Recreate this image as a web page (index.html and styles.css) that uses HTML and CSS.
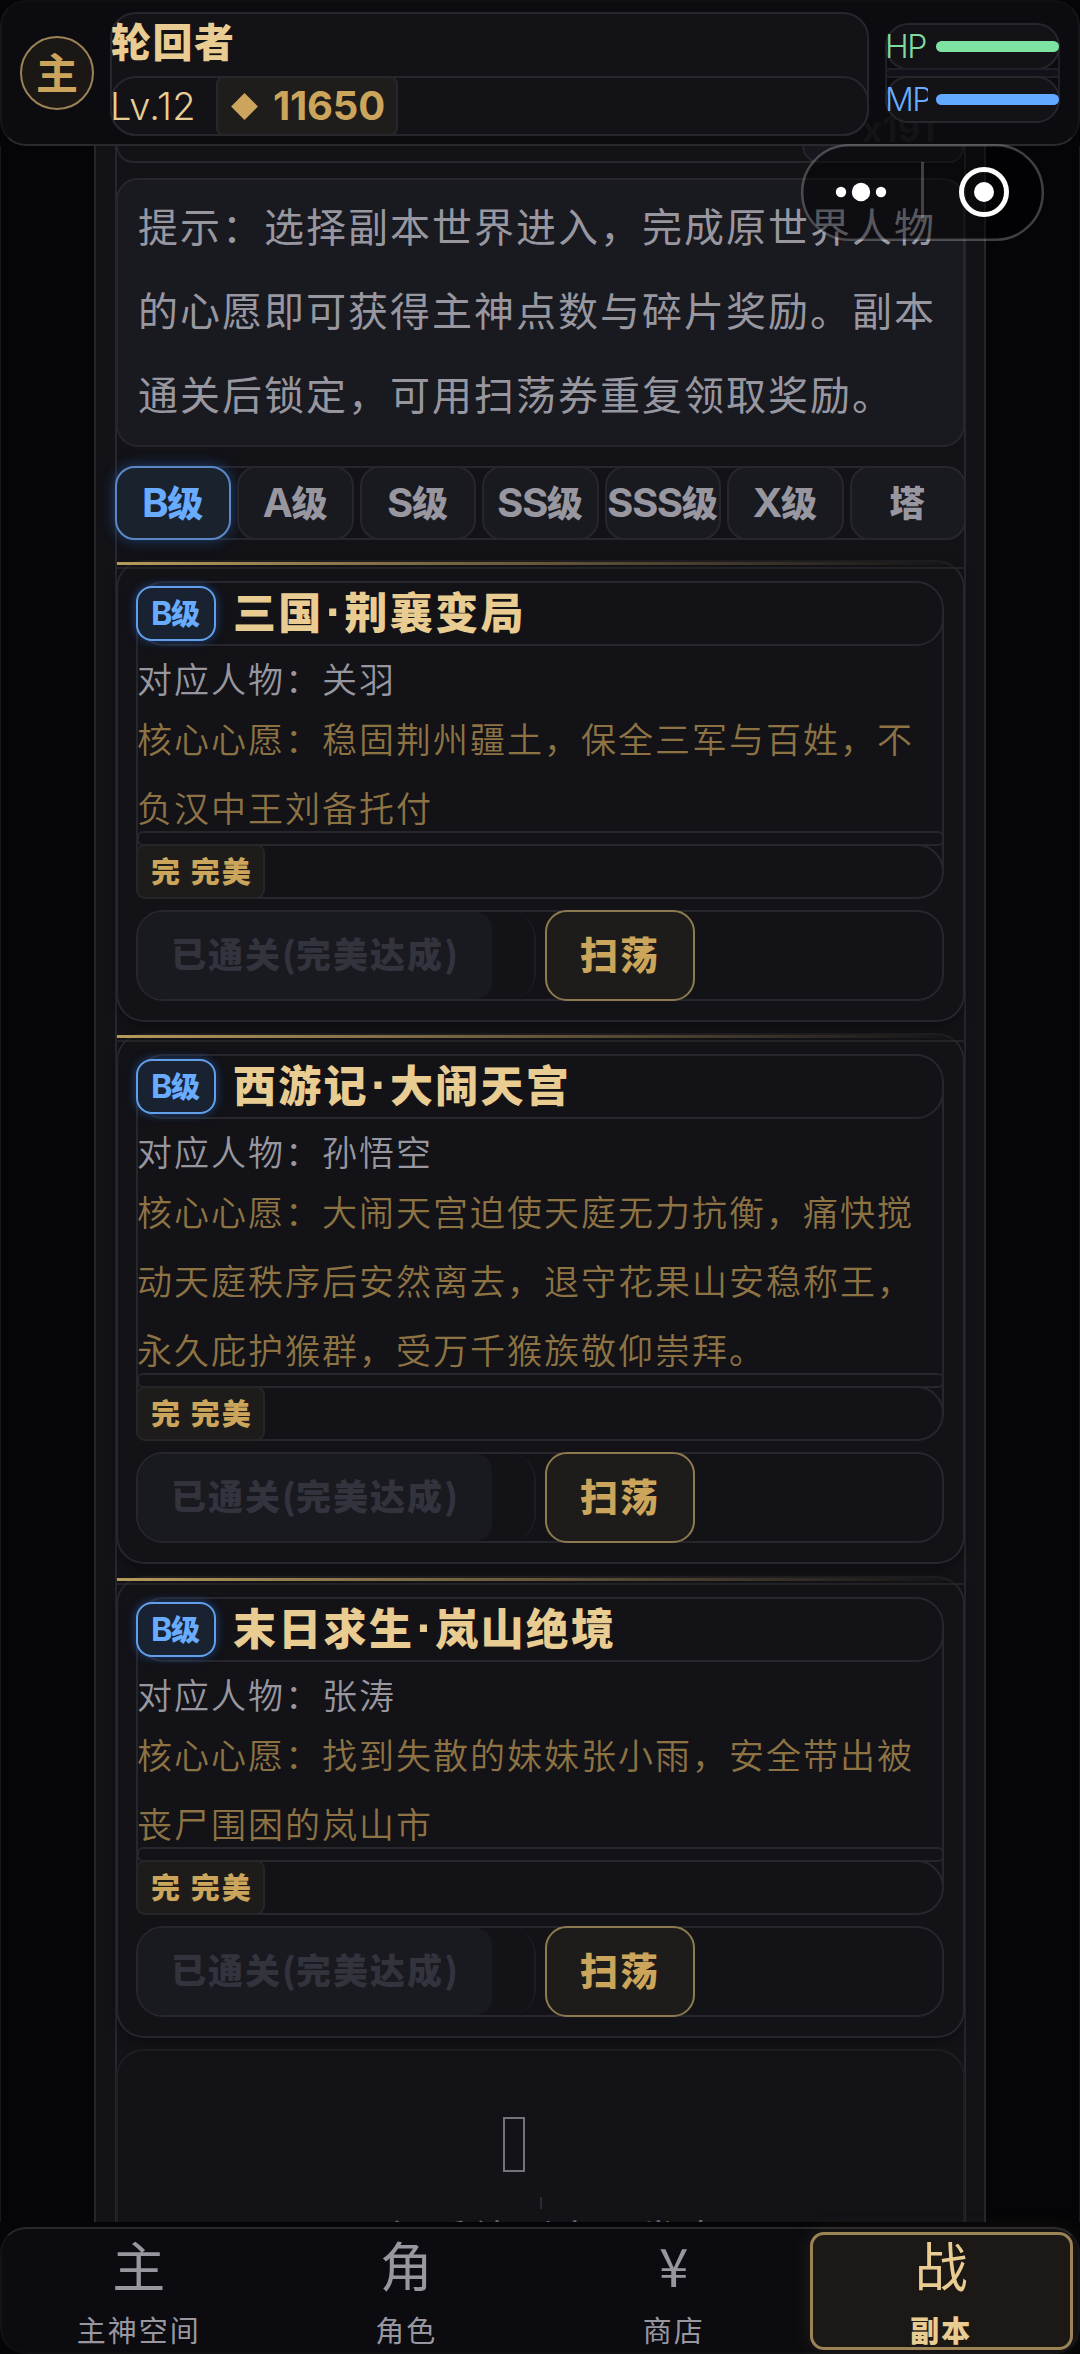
FILE: index.html
```html
<!DOCTYPE html>
<html lang="zh-CN">
<head>
<meta charset="utf-8">
<title>副本</title>
<link rel="stylesheet" href="styles.css">
</head>
<body>
<div class="app">
  <header class="header">
    <div class="avatar">主</div>
    <div class="profile">
      <div class="profile-name">轮回者</div>
      <div class="profile-row">
        <span class="level">Lv.12</span>
        <span class="points"><i class="diamond"></i><b>11650</b></span>
      </div>
    </div>
    <div class="vitals">
      <div class="vital hp"><span class="vital-label">HP</span><span class="bar"></span></div>
      <div class="vital-gap"></div>
      <div class="vital mp"><span class="vital-label">MP</span><span class="bar"></span></div>
    </div>
    <span class="ticket-count">x191</span>
  </header>

  <main class="main">
    <div class="page">
      <div class="list">
        <div class="prev"><div class="prev-chip"></div></div>
        <div class="note">提示：选择副本世界进入，完成原世界人物的心愿即可获得主神点数与碎片奖励。副本通关后锁定，可用扫荡券重复领取奖励。</div>
        <div class="tabs">
          <div class="tab active"><span class="lat">B</span>级</div>
          <div class="tab"><span class="lat">A</span>级</div>
          <div class="tab"><span class="lat">S</span>级</div>
          <div class="tab"><span class="lat">SS</span>级</div>
          <div class="tab"><span class="lat">SSS</span>级</div>
          <div class="tab"><span class="lat">X</span>级</div>
          <div class="tab">塔</div>
        </div>

        <section class="card">
          <div class="info">
            <div class="title-row"><span class="rank"><span class="lat">B</span>级</span><h2 class="title">三国<span class="dot">·</span>荆襄变局</h2></div>
            <p class="person">对应人物：关羽</p>
            <p class="wish">核心心愿：稳固荆州疆土，保全三军与百姓，不负汉中王刘备托付</p>
            <div class="divider"></div>
            <div class="result-row"><span class="result">完 完美</span></div>
          </div>
          <div class="actions"><div class="done-wrap"><div class="done">已通关<span class="paren">(</span>完美达成<span class="paren">)</span></div></div><div class="sweep">扫荡</div></div>
        </section>

        <section class="card">
          <div class="info">
            <div class="title-row"><span class="rank"><span class="lat">B</span>级</span><h2 class="title">西游记<span class="dot">·</span>大闹天宫</h2></div>
            <p class="person">对应人物：孙悟空</p>
            <p class="wish">核心心愿：大闹天宫迫使天庭无力抗衡，痛快搅动天庭秩序后安然离去，退守花果山安稳称王，永久庇护猴群，受万千猴族敬仰崇拜。</p>
            <div class="divider"></div>
            <div class="result-row"><span class="result">完 完美</span></div>
          </div>
          <div class="actions"><div class="done-wrap"><div class="done">已通关<span class="paren">(</span>完美达成<span class="paren">)</span></div></div><div class="sweep">扫荡</div></div>
        </section>

        <section class="card">
          <div class="info">
            <div class="title-row"><span class="rank"><span class="lat">B</span>级</span><h2 class="title">末日求生<span class="dot">·</span>岚山绝境</h2></div>
            <p class="person">对应人物：张涛</p>
            <p class="wish">核心心愿：找到失散的妹妹张小雨，安全带出被丧尸围困的岚山市</p>
            <div class="divider"></div>
            <div class="result-row"><span class="result">完 完美</span></div>
          </div>
          <div class="actions"><div class="done-wrap"><div class="done">已通关<span class="paren">(</span>完美达成<span class="paren">)</span></div></div><div class="sweep">扫荡</div></div>
        </section>

        <div class="empty">
          <div class="empty-icon"></div>
          <div class="empty-tick"></div>
          <div class="empty-text">B级后续副本开发中</div>
        </div>
      </div>
    </div>
  </main>

  <nav class="nav">
    <div class="nav-item"><span class="nav-icon">主</span><span class="nav-label">主神空间</span></div>
    <div class="nav-item"><span class="nav-icon">角</span><span class="nav-label">角色</span></div>
    <div class="nav-item"><span class="nav-icon">¥</span><span class="nav-label">商店</span></div>
    <div class="nav-item active"><span class="nav-icon">战</span><span class="nav-label">副本</span></div>
  </nav>

  <div class="capsule">
    <svg width="243" height="97" viewBox="0 0 243 97">
      <rect x="1.25" y="1.25" width="240.5" height="94.5" rx="47" fill="#000" fill-opacity=".42" stroke="#fff" stroke-opacity=".24" stroke-width="2.5"/>
      <circle cx="40" cy="48" r="5.2" fill="#fff"/><circle cx="60" cy="48" r="9.2" fill="#fff"/><circle cx="80" cy="48" r="5.2" fill="#fff"/>
      <path d="M121.5 18v60" stroke="#fff" stroke-opacity=".22" stroke-width="3"/>
      <circle cx="183" cy="48" r="22.5" fill="none" stroke="#fff" stroke-width="5"/><circle cx="183" cy="48" r="10" fill="#fff"/>
    </svg>
  </div>
</div>
</body>
</html>
```
FILE: styles.css
```css
* { box-sizing: border-box; }
:root {
  --line: #26262c;
  --panel: #121217;
  --raised: #191920;
  --gold: #cba55b;
  --gold-light: #e8cc92;
  --muted: #9897a0;
  --blue: #68abff;
}
body {
  margin: 0;
  background: #000;
  color: var(--muted);
  font-family: "Noto Sans CJK SC", sans-serif;
  font-weight: 400;
}
h2, p { margin: 0; }
.app {
  position: relative;
  display: flex;
  flex-direction: column;
  width: 1080px;
  height: 2354px;
  overflow: hidden;
  background: #050507;
}

/* Header */
.header {
  position: relative;
  flex: none;
  display: flex;
  align-items: flex-start;
  height: 146px;
  padding: 10px 18px;
  background: #0b0b10;
  border: 2px solid #15151a;
  border-top-color: #0f0f14;
  border-bottom-color: #29292e;
  border-radius: 26px;
}
.avatar {
  width: 74px;
  height: 74px;
  margin-top: 24px;
  border: 2px solid #9b8355;
  border-radius: 50%;
  background: #1a1714;
  color: var(--gold);
  font-size: 42px;
  font-weight: 700;
  line-height: 66px;
  text-align: center;
}
.profile {
  position: relative;
  z-index: 1;
  width: 759px;
  height: 124px;
  margin-left: 16px;
  background: var(--panel);
  border: 2px solid var(--line);
  border-radius: 26px;
}
.profile-name {
  height: 62px;
  margin-left: -1px;
  color: var(--gold-light);
  font-size: 40px;
  font-weight: 900;
  letter-spacing: 1.5px;
  line-height: 52px;
}
.profile-row {
  display: flex;
  height: 60px;
  margin: 0 -2px;
  border: 2px solid var(--line);
  border-radius: 26px;
}
.level {
  width: 106px;
  margin-left: -2px;
  color: var(--gold-light);
  font: 300 38px/57px Inter, sans-serif;
  letter-spacing: .4px;
}
.points {
  display: flex;
  align-items: center;
  width: 182px;
  height: 60px;
  margin-top: -2px;
  padding-left: 16px;
  color: var(--gold);
  background: #1f1d1c;
  border: 2px solid #27272b;
  border-radius: 8px;
}
.points b { margin-left: 18px; font: 700 40px/1 Inter, sans-serif; letter-spacing: -.2px; }
.diamond {
  width: 19px;
  height: 19px;
  margin: 0 2px 0 0;
  background: var(--gold);
  transform: translateX(1px) rotate(45deg);
}
.vitals {
  position: relative;
  z-index: 1;
  width: 175px;
  height: 100px;
  margin: 11px 0 0 16px;
}
.vitals::before {
  content: "";
  position: absolute;
  inset: 20px 0;
  border: solid #1f1f25;
  border-width: 0 2px;
}
.vital {
  position: relative;
  display: flex;
  align-items: center;
  height: 47px;
  background: var(--panel);
  border: 2px solid var(--line);
  border-radius: 24px;
}
.vital-label {
  width: 42px;
  margin: 0 8px 0 -1px;
  overflow: hidden;
  font: 300 32px/40px Inter, sans-serif;
  letter-spacing: -1.5px;
  text-indent: -1px;
}
.vital-gap {
  position: relative;
  height: 10px;
  margin: -2px 0;
  background: #12121b;
  border: 2px solid #1f1f25;
  border-radius: 4px;
}
.bar { flex: 1; height: 11px; margin-right: -1px; border-radius: 6px; }
.hp { color: #7fdc9f; }
.hp .bar { background: #7ee2a2; }
.mp { color: var(--blue); }
.mp .bar { background: #63a9ff; }
.ticket-count {
  position: absolute;
  left: 860px;
  top: 107px;
  color: #141417;
  font: 700 35px/40px Inter, sans-serif;
}

/* Scrolled page */
.main { flex: none; height: 2076px; overflow: hidden; border: solid #17171b; border-width: 0 1px; }
.page {
  width: 892px;
  height: 2100px;
  margin-left: 93px;
  padding: 0 18px 0 19px;
  background: var(--panel);
  border: solid var(--line);
  border-width: 0 2px;
}
.list {
  display: flex;
  flex-direction: column;
  height: 2100px;
  border: solid var(--line);
  border-width: 0 2px;
}
.prev {
  flex: none;
  display: flex;
  justify-content: flex-end;
  height: 17px;
  margin: 0 -1px;
  border: solid var(--line);
  border-width: 0 2px 2px;
  border-radius: 0 0 24px 24px;
}
.prev-chip { width: 161px; height: 17px; background: #171720; border: solid var(--line); border-width: 0 2px 2px; border-radius: 0 0 14px 18px; }
.note {
  flex: none;
  height: 269px;
  margin: 15px -1px 0;
  padding: 3px 0 0 20px;
  background: var(--raised);
  border: 2px solid var(--line);
  border-radius: 22px;
  font-size: 40px;
  letter-spacing: 2px;
  line-height: 84px;
}
.tabs {
  flex: none;
  display: flex;
  gap: 6px;
  height: 74px;
  margin: 19px -2px 0;
  border: solid var(--line);
  border-width: 2px 0;
  border-radius: 20px;
}
.tab {
  flex: 1 1 0;
  height: 74px;
  margin-top: -2px;
  background: var(--raised);
  border: 2px solid var(--line);
  border-radius: 20px;
  font-size: 36px;
  font-weight: 900;
  line-height: 67px;
  text-align: center;
  text-indent: -1px;
  white-space: nowrap;
}
.lat { font-family: Inter, sans-serif; font-size: 1.12em; font-weight: 700; letter-spacing: -1.5px; line-height: 1; }
.tab.active {
  color: var(--blue);
  background: #1a222e;
  border-color: #5b87c5;
  box-shadow: 0 0 14px rgba(50, 120, 220, .45);
}

/* Cards */
.card {
  position: relative;
  flex: none;
  margin: 11.4px -1px 0;
  padding: 19px 19px 19px 18px;
  background: var(--panel);
  border: 2px solid var(--line);
  border-top-color: #1e1c1e;
  border-radius: 28px;
  box-shadow: 0 4px 12px rgba(0, 0, 0, .3);
}
.tabs + .card { margin-top: 20px; }
.card::before {
  content: "";
  position: absolute;
  left: -1px;
  right: -1px;
  top: 0;
  height: 5px;
  background: linear-gradient(90deg, #b59a5c, rgba(203, 165, 91, 0)) 0 0 / 100% 3px no-repeat;
  border-bottom: 2px solid rgba(58, 55, 58, .45);
}
.info { position: relative; }
.info::before {
  content: "";
  position: absolute;
  inset: 32px 0 24px;
  border: solid var(--line);
  border-width: 0 2px;
}
.title-row, .result-row, .person, .wish, .divider { position: relative; }
.title-row {
  display: flex;
  align-items: center;
  height: 65px;
  border: 2px solid var(--line);
  border-radius: 28px;
  background: var(--panel);
}
.rank {
  width: 80px;
  height: 55px;
  margin: 0 0 0 -2px;
  color: var(--blue);
  background: #192230;
  border: 2px solid #639fe9;
  border-radius: 16px;
  box-shadow: 0 0 10px rgba(50, 120, 230, .5);
  font-size: 29px;
  font-weight: 900;
  line-height: 48px;
  text-align: center;
  text-indent: -1px;
  white-space: nowrap;
}
.title {
  margin: -6px 0 0 17px;
  color: var(--gold-light);
  font-size: 43px;
  font-weight: 900;
  letter-spacing: 2.3px;
  line-height: 57px;
}
.dot {
  display: inline-block;
  width: 21px;
  font-family: "Liberation Sans", sans-serif;
  font-size: 50px;
  letter-spacing: 0;
  line-height: 1;
  text-align: center;
}
.person, .wish { padding-left: 1px; font-size: 35px; letter-spacing: 2px; font-weight: 350; }
.person { height: 57px; padding-top: 4px; line-height: 56px; }
.wish { margin-bottom: -10px; line-height: 69px; color: #8d7344; }
.divider { height: 15px; margin: 0 0 -2px 1px; border: 2px solid var(--line); border-radius: 6px; background: var(--panel); }
.result-row { height: 55px; border: 2px solid var(--line); border-radius: 28px; }
.result {
  display: block;
  width: 129px;
  height: 55px;
  margin: -2px 0 0 -2px;
  padding-left: 13px;
  color: var(--gold);
  background: #1e1c1b;
  border: 2px solid #26262a;
  border-radius: 9px;
  font-size: 29px;
  font-weight: 900;
  letter-spacing: 2px;
  line-height: 49px;
  white-space: nowrap;
}
.actions {
  display: flex;
  height: 91px;
  margin-top: 11px;
  border: 2px solid var(--line);
  border-radius: 27px;
}
.done-wrap {
  width: 398px;
  height: 87px;
  border-right: 2px solid #1c1c22;
  border-radius: 26px;
}
.done {
  width: 354px;
  height: 87px;
  padding-left: 33px;
  color: #33333d;
  background: #191920;
  border-radius: 25px 16px 16px 25px;
  font-size: 35px;
  font-weight: 900;
  letter-spacing: 2px;
  line-height: 82px;
  white-space: nowrap;
}
.paren { display: inline-block; width: 14px; text-align: center; letter-spacing: 0; }
.sweep {
  width: 150px;
  height: 91px;
  margin: -2px 0 0 9px;
  color: var(--gold);
  background: #1e1c1b;
  border: 2px solid #8e7a51;
  border-radius: 22px;
  font-size: 38px;
  font-weight: 900;
  letter-spacing: 2px;
  line-height: 82px;
  text-align: center;
}

/* Empty state */
.empty {
  flex: none;
  display: flex;
  flex-direction: column;
  align-items: center;
  height: 300px;
  margin: 11px -1px 0;
  padding-top: 66px;
  border: 2px solid #1d1d22;
  border-radius: 28px;
  color: #66656e;
}
.empty-icon { width: 22px; height: 55px; margin-right: 53px; border: 2px solid #74737a; }
.empty-tick { width: 2px; height: 12px; margin-top: 25px; background: #2a2a30; }
.empty-text { font-size: 40px; letter-spacing: 2px; line-height: 60px; margin-top: -2px; }

/* Bottom navigation */
.nav {
  display: flex;
  gap: 4px;
  height: 127px;
  margin-top: 5px;
  padding: 3px 5px;
  background: #0b0b10;
  border: 2px solid #121217;
  border-top-color: #27272c;
  border-bottom-color: #101014;
  border-radius: 26px;
}
.nav-item {
  flex: 1;
  display: flex;
  flex-direction: column;
  align-items: center;
  height: 118px;
  border: 3px solid transparent;
  border-radius: 14px;
}
.nav-icon { flex: none; height: 62px; font-size: 53px; line-height: 58px; }
.nav-label { flex: none; margin-top: 14px; font-size: 29px; letter-spacing: 2px; line-height: 36px; }
.nav-item.active {
  color: var(--gold-light);
  background: #1b1815;
  border-color: #9b8355;
  box-shadow: 0 0 22px rgba(203, 165, 91, .13);
}
.active .nav-label { font-weight: 900; }

/* Host menu floating over the page */
.capsule { position: absolute; left: 801px; top: 144px; width: 243px; height: 97px; }
.capsule svg { display: block; }
```
